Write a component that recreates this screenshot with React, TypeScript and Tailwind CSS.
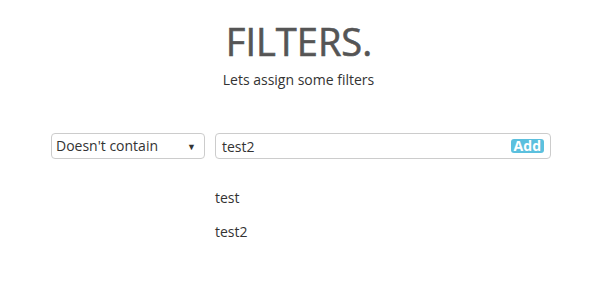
import React from 'react';

const App: React.FC = () => {
  const items = ['test', 'test2'];

  return (
    <div className="w-[596px] h-[298px] bg-white text-[#333] font-['Open_Sans',sans-serif]">
      {/* Header */}
      <div className="flex flex-col items-center pt-[21px]">
        <h1 className="text-[38px] leading-[40px] text-[#555] font-normal ml-[2px] [-webkit-text-stroke:0.6px_#555]">FILTERS.</h1>
        <p className="text-[14px] leading-[20px] mt-[9px] ml-[1px]">Lets assign some filters</p>
      </div>

      {/* Filter row */}
      <div className="flex gap-[10px] ml-[51px] mt-[43px] w-[500px]">
        <div className="relative w-[154px] h-[26px] border border-[#ccc] rounded-[4px] flex items-center pl-[4px]">
          <span className="text-[14px] leading-none">Doesn't contain</span>
          <span className="absolute right-[8px] top-[8px] text-[9px] leading-none text-[#333]">▼</span>
        </div>
        <div className="flex-1 h-[26px] border border-[#ccc] rounded-[4px] flex items-center justify-between pl-[6px] pr-[6px]">
          <span className="text-[14px] leading-none pt-[1px]">test2</span>
          <span className="bg-[#5bc0de] text-white font-bold text-[14px] leading-[14px] px-[3px] rounded-[3px]">Add</span>
        </div>
      </div>

      {/* List */}
      <div className="ml-[215px] mt-[29px] flex flex-col gap-[14px]">
        {items.map((item, idx) => (
          <div key={idx} className="text-[14px] leading-[20px]">{item}</div>
        ))}
      </div>
    </div>
  );
};

export default App;
